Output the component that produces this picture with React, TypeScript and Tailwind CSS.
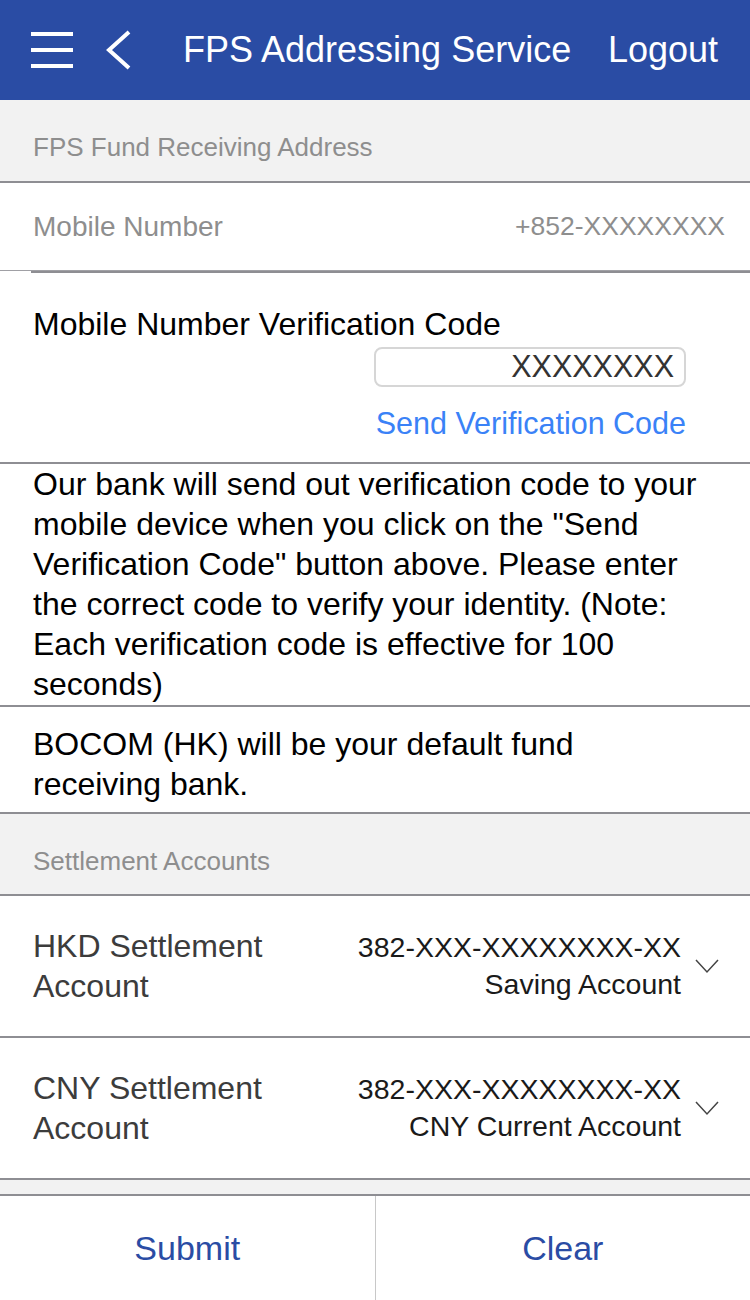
import React from "react";

const font = { fontFamily: '"Liberation Sans", Arial, sans-serif' };

function Chevron() {
  return (
    <svg width="26" height="16" viewBox="0 0 26 16" className="shrink-0">
      <polyline points="2,2 13,14 24,2" fill="none" stroke="#444" strokeWidth="1.5" />
    </svg>
  );
}

function AccountRow({ label1, label2, num, type }: { label1: string; label2: string; num: string; type: string }) {
  return (
    <div className="flex h-[142px] items-center border-b-2 border-[#8e8e93] bg-white pl-[33px] pr-[30px]">
      <div className="flex-1 text-[32px] leading-[40px] text-[#3c3c3c]">
        <div>{label1}</div>
        <div>{label2}</div>
      </div>
      <div className="flex items-center gap-[13px]">
        <div className="text-right text-[28.5px] leading-[37px] text-[#1a1a1a]">
          <div>{num}</div>
          <div>{type}</div>
        </div>
        <Chevron />
      </div>
    </div>
  );
}

export default function App() {
  return (
    <div className="flex h-[1300px] w-[750px] flex-col overflow-hidden bg-white" style={font}>
      <div className="flex h-[100px] shrink-0 items-center bg-[#2a4ca4] pl-[31px] pr-[32px] text-white">
        <div className="flex h-[36px] w-[42px] flex-col justify-between">
          <div className="h-[4px] bg-white" />
          <div className="h-[4px] bg-white" />
          <div className="h-[4px] bg-white" />
        </div>
        <svg width="30" height="40" viewBox="0 0 30 40" className="ml-[30px]">
          <polyline points="26,2 6,20 26,38" fill="none" stroke="white" strokeWidth="4" />
        </svg>
        <div className="ml-[50px] flex-1 text-[36px]">FPS Addressing Service</div>
        <div className="text-[36px]">Logout</div>
      </div>

      <div className="flex h-[83px] shrink-0 items-center border-b-2 border-[#8e8e93] bg-[#f2f2f2] pl-[33px] pt-[14px] text-[26px] text-[#8e8e8e]">
        FPS Fund Receiving Address
      </div>

      <div className="flex h-[88px] shrink-0 items-center justify-between border-b border-[#a0a0a5] bg-white pl-[33px] pr-[25px] text-[#8e8e8e]">
        <span className="text-[28px]">Mobile Number</span>
        <span className="text-[26.5px]">+852-XXXXXXXX</span>
      </div>
      <div className="h-[2px] shrink-0 bg-white pl-[31px]">
        <div className="h-full bg-[#8e8e93]" />
      </div>

      <div className="flex h-[191px] shrink-0 flex-col border-b-2 border-[#8e8e93] bg-white pl-[33px] pr-[64px] pt-[32px]">
        <div className="text-[32px] leading-[38px] text-black">Mobile Number Verification Code</div>
        <div className="mt-[4px] flex justify-end">
          <div className="flex h-[40px] w-[312px] items-center justify-end rounded-[8px] border-2 border-[#d6d6d6] pr-[10px] text-[30.5px] text-[#333]">
            XXXXXXXX
          </div>
        </div>
        <div className="mt-[14px] text-right text-[30.5px] text-[#3a82f7]">Send Verification Code</div>
      </div>

      <div className="shrink-0 border-b-2 border-[#8e8e93] bg-white pb-[1px] pl-[33px] pr-[30px] text-[32px] leading-[40px] text-black">
        Our bank will send out verification code to your mobile device when you click on the "Send Verification Code" button above. Please enter the correct code to verify your identity. (Note: Each verification code is effective for 100 seconds)
      </div>

      <div className="shrink-0 border-b-2 border-[#8e8e93] bg-white pb-[8px] pl-[33px] pr-[150px] pt-[17px] text-[32px] leading-[40px] text-black">
        BOCOM (HK) will be your default fund receiving bank.
      </div>

      <div className="flex h-[82px] shrink-0 items-center border-b-2 border-[#8e8e93] bg-[#f2f2f2] pl-[33px] pt-[14px] text-[26px] text-[#8e8e8e]">
        Settlement Accounts
      </div>

      <AccountRow label1="HKD Settlement" label2="Account" num="382-XXX-XXXXXXXX-XX" type="Saving Account" />
      <AccountRow label1="CNY Settlement" label2="Account" num="382-XXX-XXXXXXXX-XX" type="CNY Current Account" />

      <div className="h-[16px] shrink-0 border-b-2 border-[#8e8e93] bg-[#f2f2f2]" />

      <div className="flex flex-1 bg-white text-[34px] text-[#2a4ca4]">
        <div className="flex flex-1 items-center justify-center border-r border-[#c8c8c8]">Submit</div>
        <div className="flex flex-1 items-center justify-center">Clear</div>
      </div>
    </div>
  );
}
